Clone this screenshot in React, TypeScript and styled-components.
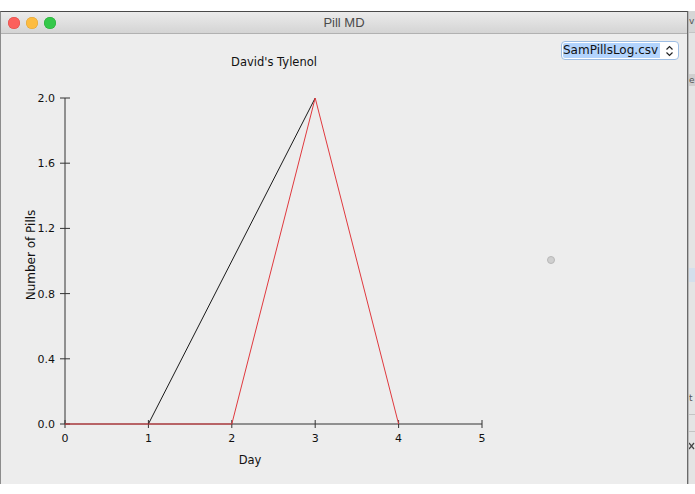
import React from "react";
import styled, { createGlobalStyle } from "styled-components";

const Global = createGlobalStyle`
  html, body { margin: 0; padding: 0; background: #ffffff; }
  body { font-family: "DejaVu Sans", "Liberation Sans", sans-serif; }
`;

const Desktop = styled.div`
  width: 695px;
  height: 494px;
  display: flex;
  flex-direction: row;
  padding-top: 11px;
  box-sizing: border-box;
  background: #ffffff;
  overflow: hidden;
`;

const Window = styled.div`
  width: 688px;
  height: 473px;
  flex: none;
  display: flex;
  flex-direction: column;
  box-sizing: border-box;
  border-top: 1px solid #4a4a4a;
  border-left: 1px solid #8c8c8c;
  border-right: 1px solid #6a6a6a;
  background: #ededed;
`;

const TitleBar = styled.div`
  height: 21px;
  flex: none;
  display: flex;
  align-items: center;
  position: relative;
  background: linear-gradient(#ebebeb, #d4d4d4);
  border-bottom: 1px solid #b1b1b1;
`;

const Lights = styled.div`
  display: flex;
  gap: 6px;
  padding-left: 7px;
`;

const Light = styled.div<{ $c: string; $b: string }>`
  width: 12px;
  height: 12px;
  border-radius: 50%;
  background: ${(p) => p.$c};
  box-shadow: inset 0 0 0 0.5px ${(p) => p.$b};
`;

const Title = styled.div`
  position: absolute;
  left: 0;
  right: 0;
  top: 0;
  bottom: 0;
  display: flex;
  align-items: center;
  justify-content: center;
  font-family: "Liberation Sans", sans-serif;
  font-size: 13px;
  color: #4b4b4b;
  pointer-events: none;
`;

const Content = styled.div`
  flex: 1;
  position: relative;
  display: flex;
  flex-direction: row;
  align-items: flex-start;
`;

const ChartSvg = styled.svg`
  display: block;
  flex: none;
  font-family: "DejaVu Sans", sans-serif;
`;

const Select = styled.div`
  margin-left: auto;
  margin-right: 8px;
  margin-top: 7px;
  width: 118px;
  height: 19px;
  box-sizing: border-box;
  border: 1px solid #9dbde3;
  border-radius: 4px;
  background: #ffffff;
  display: flex;
  align-items: stretch;
  padding: 1px;
`;

const SelectText = styled.div`
  background: #b3d4fd;
  color: #111;
  font-size: 12px;
  line-height: 15px;
  padding: 0 2px 0 0;
  border-radius: 2px 0 0 2px;
`;

const Chevron = styled.div`
  margin-left: auto;
  width: 16px;
  display: flex;
  align-items: center;
  justify-content: center;
`;

const Spinner = styled.div`
  position: absolute;
  left: 546px;
  top: 222px;
  width: 6px;
  height: 6px;
  border-radius: 50%;
  background: #cfcfcf;
  border: 1px solid #b8b8b8;
`;

const BackWindow = styled.div`
  flex: 1;
  height: 473px;
  display: flex;
  flex-direction: column;
  background: #e4e4e4;
  border-left: 1px solid #b8b8b8;
  font-family: "DejaVu Sans", sans-serif;
  font-size: 9px;
  color: #555;
  overflow: hidden;
  white-space: nowrap;
`;

const BackRow = styled.div<{ $h: number; $bg?: string; $line?: boolean; $mt?: number }>`
  height: ${(p) => p.$h}px;
  flex: none;
  margin-top: ${(p) => p.$mt ?? 0}px;
  background: ${(p) => p.$bg ?? "transparent"};
  border-bottom: ${(p) => (p.$line ? "1px solid #c4c4c4" : "none")};
  line-height: ${(p) => p.$h}px;
  display: flex;
  align-items: center;
`;

const X0 = 64;
const Y0 = 390;
const DX = 83.4;
const DY = 163;
const px = (v: number) => X0 + v * DX;
const py = (v: number) => Y0 - v * DY;

const yTicks = [0, 0.4, 0.8, 1.2, 1.6, 2.0];
const xTicks = [0, 1, 2, 3, 4, 5];

const black: [number, number][] = [
  [1, 0],
  [3, 2],
];
const red: [number, number][] = [
  [0, 0],
  [1, 0],
  [2, 0],
  [3, 2],
  [4, 0],
];

const pts = (d: [number, number][]) => d.map(([x, y]) => `${px(x)},${py(y)}`).join(" ");

function Chart() {
  return (
    <ChartSvg width={520} height={450} viewBox="0 0 520 450">
      <text x={273} y={32} fontSize={11.5} textAnchor="middle" fill="#111">
        David's Tylenol
      </text>
      <line x1={X0} y1={py(2)} x2={X0} y2={Y0} stroke="#333" strokeWidth={1} />
      <line x1={X0} y1={Y0} x2={px(5)} y2={Y0} stroke="#333" strokeWidth={1} />
      {yTicks.map((t) => (
        <g key={t}>
          <line x1={X0 - 5} y1={py(t)} x2={X0 + 5} y2={py(t)} stroke="#333" />
          <text x={54} y={py(t) + 4} fontSize={11} textAnchor="end" fill="#111">
            {t.toFixed(1)}
          </text>
        </g>
      ))}
      {xTicks.map((t) => (
        <g key={t}>
          <line x1={px(t)} y1={Y0 - 4} x2={px(t)} y2={Y0 + 4} stroke="#333" />
          <text x={px(t)} y={Y0 + 18} fontSize={11} textAnchor="middle" fill="#111">
            {t}
          </text>
        </g>
      ))}
      <polyline points={pts(black)} fill="none" stroke="#1a1a1a" strokeWidth={1} />
      <polyline points={pts(red)} fill="none" stroke="#e0393e" strokeWidth={1} />
      <text x={249} y={430} fontSize={11.5} textAnchor="middle" fill="#111">
        Day
      </text>
      <text
        x={0}
        y={0}
        fontSize={12}
        textAnchor="middle"
        fill="#111"
        transform="translate(34 221) rotate(-90)"
      >
        Number of Pills
      </text>
    </ChartSvg>
  );
}

export default function App() {
  return (
    <>
      <Global />
      <Desktop>
        <Window>
          <TitleBar>
            <Lights>
              <Light $c="#fc605c" $b="#de4a46" />
              <Light $c="#fdbc40" $b="#dea236" />
              <Light $c="#34c84a" $b="#27aa35" />
            </Lights>
            <Title>Pill MD</Title>
          </TitleBar>
          <Content>
            <Chart />
            <Select>
              <SelectText>SamPillsLog.csv</SelectText>
              <Chevron>
                <svg width="9" height="12" viewBox="0 0 9 12">
                  <path d="M1.5 4.5 L4.5 1.5 L7.5 4.5 M1.5 7.5 L4.5 10.5 L7.5 7.5" fill="none" stroke="#222" strokeWidth="1.2" />
                </svg>
              </Chevron>
            </Select>
            <Spinner />
          </Content>
        </Window>
        <BackWindow>
          <BackRow $h={21} $bg="#d6d6d6" $line>
            v
          </BackRow>
          <BackRow $h={12} $mt={41} $bg="#cfcfcf">
            e
          </BackRow>
          <BackRow $h={14} $mt={182} $bg="#d4dfec" />
          <BackRow $h={12} $mt={110}>
            t
          </BackRow>
          <BackRow $h={10} $line />
          <BackRow $h={12} $mt={4} $line />
          <BackRow $h={12} $mt={8}>
            <svg width="6" height="8" viewBox="0 0 6 8">
              <path d="M0 1 L5 7 M5 1 L0 7" stroke="#444" strokeWidth="1.2" fill="none" />
            </svg>
          </BackRow>
        </BackWindow>
      </Desktop>
    </>
  );
}
